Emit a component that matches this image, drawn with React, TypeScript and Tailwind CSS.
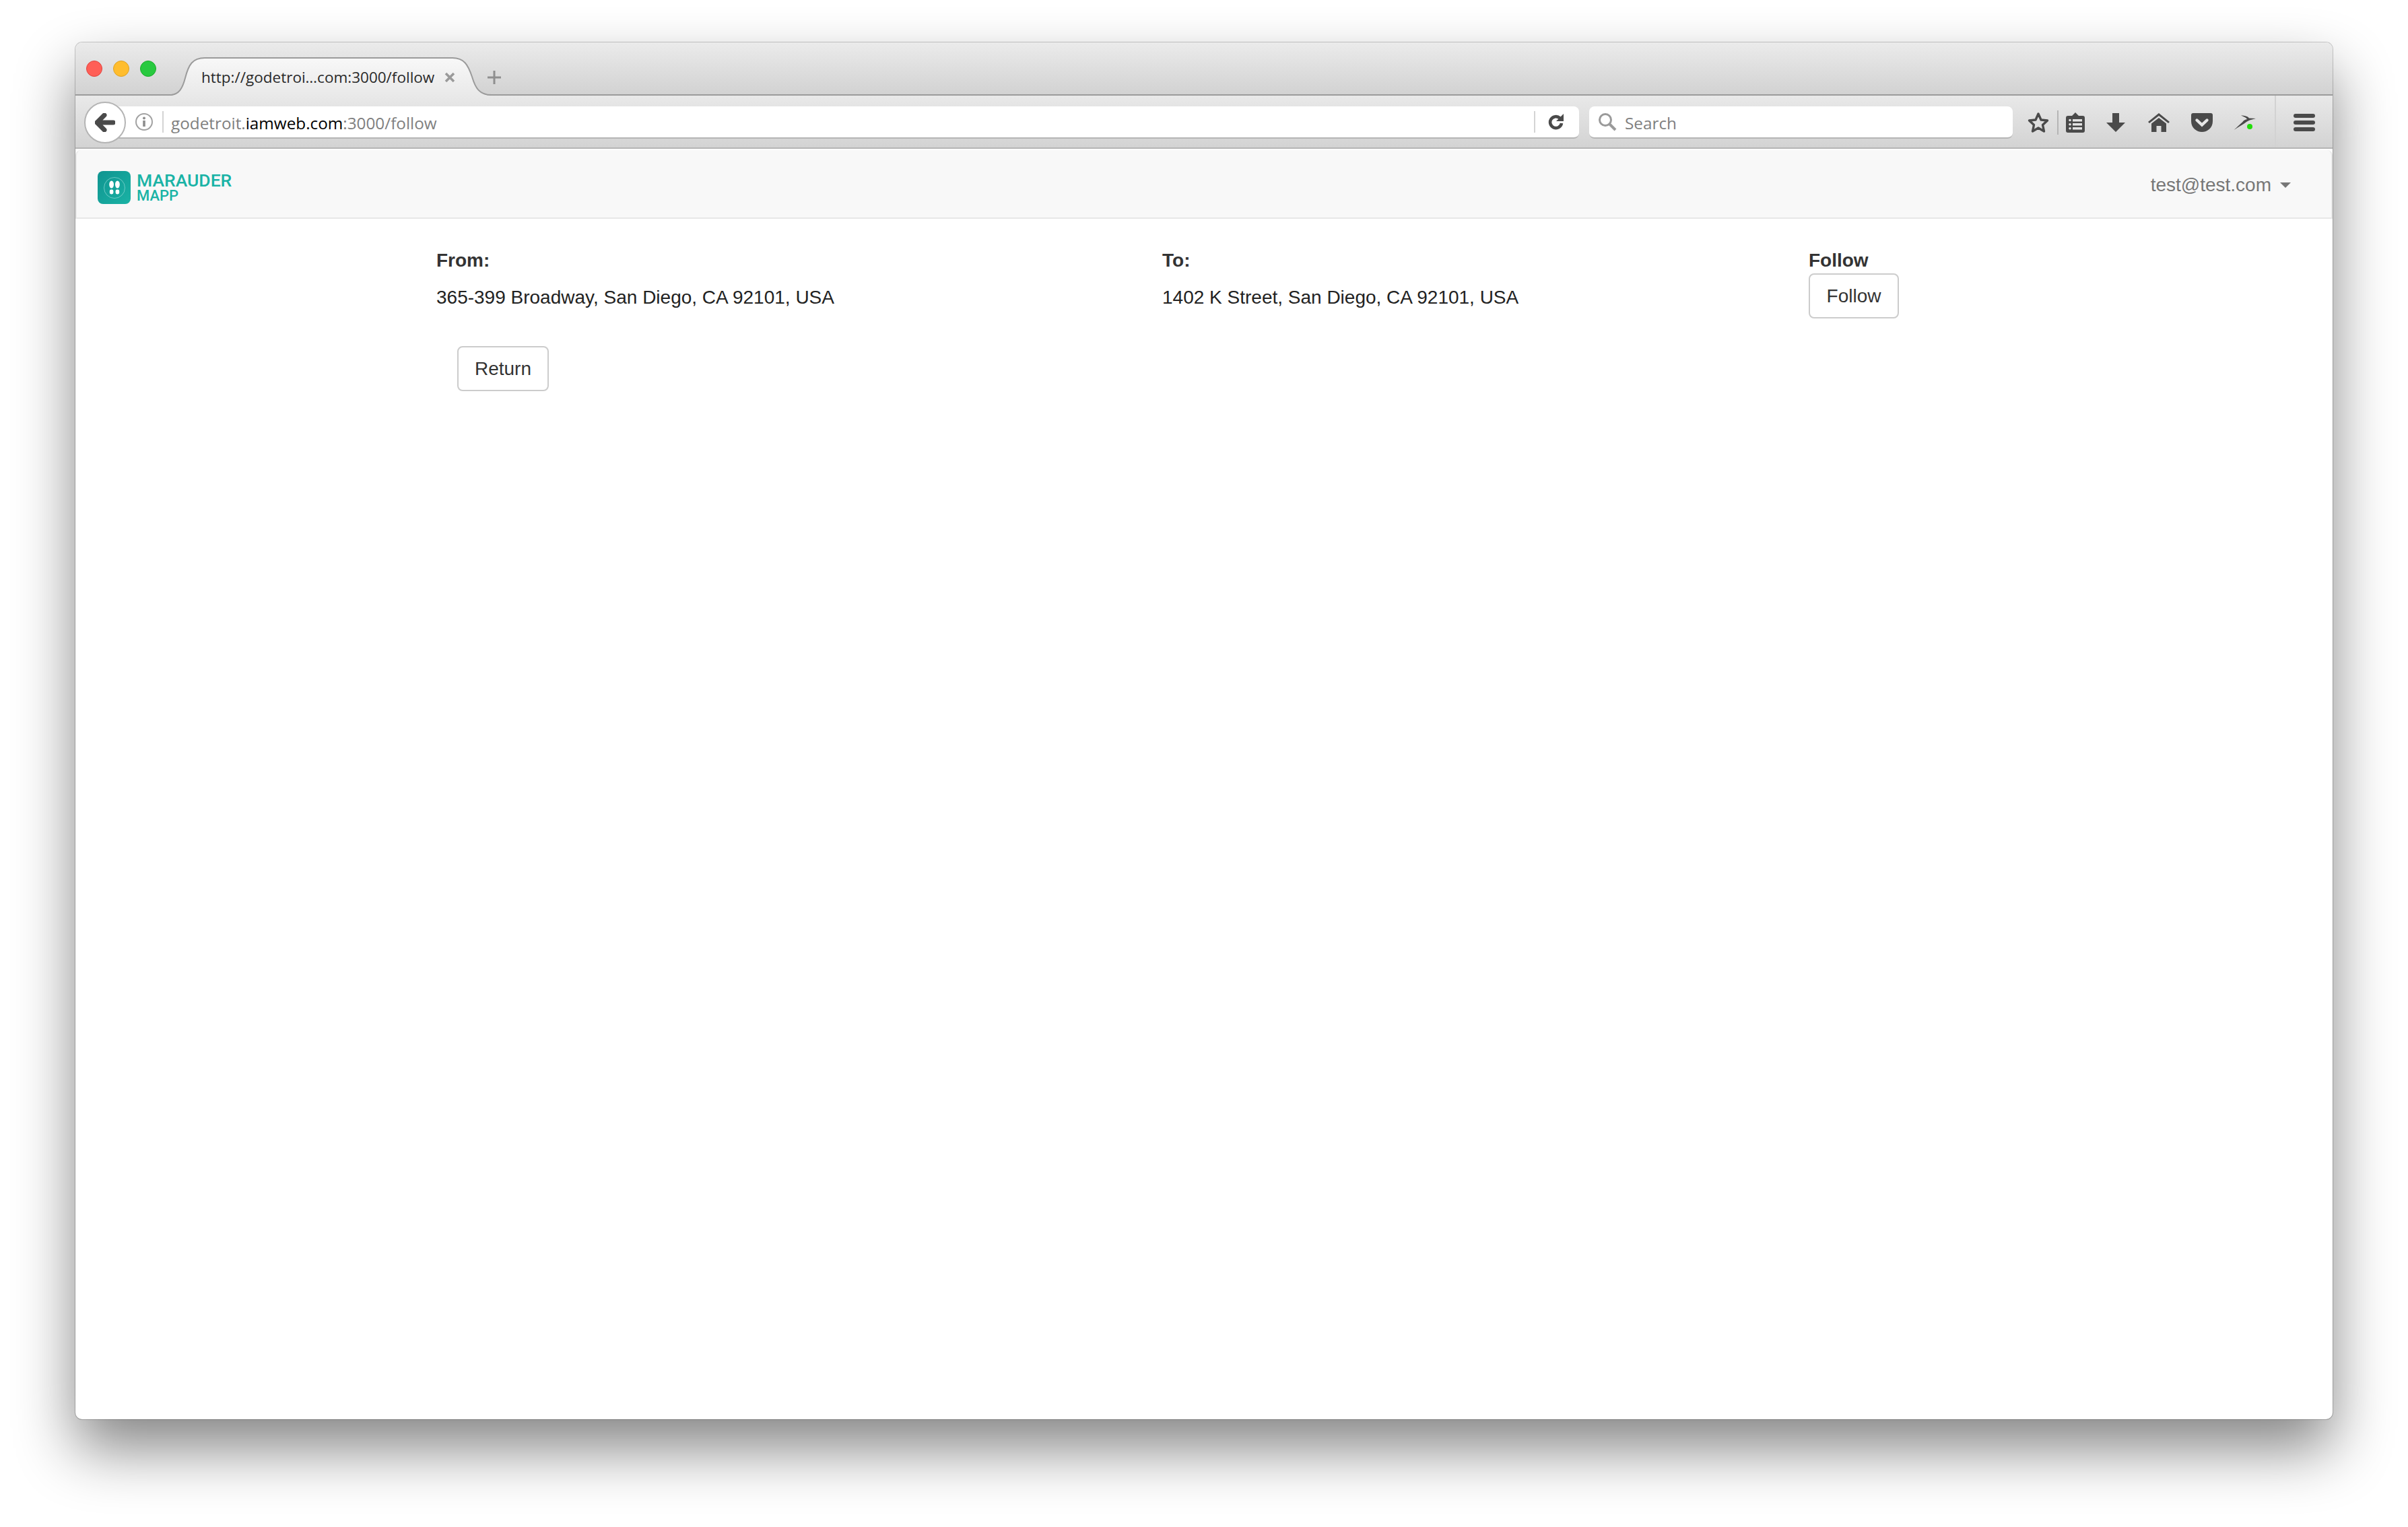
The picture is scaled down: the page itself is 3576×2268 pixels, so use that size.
import React from "react";

const ICON = "#4a4a4a";

function Tab() {
  return (
    <div className="relative z-10 ml-2 -mb-[2px] h-[58px] w-[500px] self-end">
      <svg className="absolute inset-0" width="500" height="58" viewBox="0 0 500 58">
        <defs>
          <linearGradient id="tabFill" x1="0" y1="0" x2="0" y2="1">
            <stop offset="0" stopColor="#f8f8f8" />
            <stop offset="1" stopColor="#e9e9e9" />
          </linearGradient>
        </defs>
        <path d="M0 58 H12 C26 58 31 47 35 32 C40 12 46 2 64 2 H432 C449 2 455 12 461 30 C466 47 472 58 490 58 Z" fill="url(#tabFill)" />
        <path d="M0 57 H12 C26 57 31 47 35 32 C40 12 46 2 64 2 H432 C449 2 455 12 461 30 C466 47 472 57 490 57 H500" fill="none" stroke="#9b9b9b" strokeWidth="2" />
      </svg>
      <div className="relative flex h-full items-center pl-[59px] pt-[4px]">
        <span className="font-['Open_Sans',sans-serif] text-[22.5px] leading-none whitespace-nowrap text-[#2a2a2a]">http://godetroi…com:3000/follow</span>
        <span className="absolute left-[420px] top-[23px]">
          <svg width="16" height="16" viewBox="0 0 16 16"><path d="M2 2 L14 14 M14 2 L2 14" stroke="#9a9a9a" strokeWidth="3.6" /></svg>
        </span>
      </div>
    </div>
  );
}

function BackButton() {
  return (
    <div className="relative z-10 flex h-[62px] w-[62px] shrink-0 items-center justify-center rounded-full border-2 border-[#b4b4b4] bg-white">
      <svg width="30" height="28" viewBox="0 0 30 28"><path d="M14 3 L3 14 L14 25 M4 14 H27" fill="none" stroke={ICON} strokeWidth="7" strokeLinejoin="round" strokeLinecap="round" /></svg>
    </div>
  );
}

function UrlBar() {
  return (
    <div className="-ml-[17px] flex h-[48px] w-[2175px] shrink-0 items-center rounded-r-[8px] border-b-2 border-[#b5b5b5] bg-white pl-[31px]">
      <svg width="26" height="26" viewBox="0 0 26 26" className="shrink-0">
        <circle cx="13" cy="13" r="12" fill="none" stroke="#a2a2a2" strokeWidth="2" />
        <circle cx="13" cy="7.5" r="2" fill="#8e8e8e" />
        <rect x="11.2" y="11" width="3.6" height="9" fill="#8e8e8e" />
      </svg>
      <div className="ml-[14px] h-[32px] w-[2px] shrink-0 bg-[#d4d4d4]" />
      <div className="ml-[11px] flex-1 pt-[4px] font-['Open_Sans',sans-serif] text-[24.3px] leading-none whitespace-nowrap text-[#808080]">
        godetroit.<span className="text-black">iamweb.com</span>:3000/follow
      </div>
      <div className="h-[32px] w-[2px] shrink-0 bg-[#d4d4d4]" />
      <svg width="24" height="24" viewBox="0 0 24 24" className="ml-[19px] mr-[22px] shrink-0">
        <path d="M17.5 6.5 A8.5 8.5 0 1 0 20 14" fill="none" stroke={ICON} strokeWidth="4.6" />
        <path d="M23 0 V11 H12 Z" fill={ICON} />
      </svg>
    </div>
  );
}

function SearchBar() {
  return (
    <div className="ml-[15px] flex h-[48px] w-[629px] shrink-0 items-center rounded-[8px] border-b-2 border-[#b5b5b5] bg-white pl-[13px]">
      <svg width="28" height="28" viewBox="0 0 28 28" className="shrink-0">
        <circle cx="11" cy="11" r="8.5" fill="none" stroke="#9a9a9a" strokeWidth="3" />
        <path d="M17 17 L26 26" stroke="#9a9a9a" strokeWidth="4" />
      </svg>
      <span className="ml-[12px] pt-[4px] font-['Open_Sans',sans-serif] text-[24.3px] leading-none text-[#808080]">Search</span>
    </div>
  );
}

function ToolbarIcons() {
  return (
    <>
      <svg width="32" height="32" viewBox="0 0 32 32" className="ml-[22px] shrink-0">
        <path d="M16 3 L20 12 L29.5 13 L22.5 19.5 L24.5 29 L16 24 L7.5 29 L9.5 19.5 L2.5 13 L12 12 Z" fill="none" stroke={ICON} strokeWidth="3.4" strokeLinejoin="round" />
      </svg>
      <div className="ml-[12px] h-[36px] w-[2px] shrink-0 bg-[#b5b5b5]" />
      <svg width="28" height="30" viewBox="0 0 28 30" className="ml-[11px] shrink-0">
        <path d="M3 5 H9 L14 0 L19 5 H25 A3 3 0 0 1 28 8 V27 A3 3 0 0 1 25 30 H3 A3 3 0 0 1 0 27 V8 A3 3 0 0 1 3 5 Z" fill={ICON} />
        <path d="M10 10 H24 V13.5 H10 Z M10 16 H24 V19.5 H10 Z M10 22 H24 V25.5 H10 Z" fill="#e3e3e3" />
        <circle cx="6" cy="11.5" r="1.8" fill="#e3e3e3" />
        <circle cx="6" cy="17.7" r="1.8" fill="#e3e3e3" />
        <circle cx="6" cy="23.7" r="1.8" fill="#e3e3e3" />
      </svg>
      <svg width="28" height="28" viewBox="0 0 28 28" className="ml-[32px] shrink-0">
        <path d="M9 0 H19 V14 H28 L14 28 L0 14 H9 Z" fill={ICON} />
      </svg>
      <svg width="32" height="28" viewBox="0 0 32 28" className="ml-[34px] shrink-0">
        <path d="M16 0 L32 13 L30 15 L16 4 L2 15 L0 13 Z" fill={ICON} />
        <path d="M16 7 L27 15.5 V28 H19.5 V19 H12.5 V28 H5 V15.5 Z" fill={ICON} />
      </svg>
      <svg width="32" height="28" viewBox="0 0 32 28" className="ml-[32px] shrink-0">
        <path d="M3 0 H29 A3 3 0 0 1 32 3 V12 C32 22 24 28 16 28 C8 28 0 22 0 12 V3 A3 3 0 0 1 3 0 Z" fill={ICON} />
        <path d="M8.5 10.5 L16 17.5 L23.5 10.5" fill="none" stroke="#e6e6e6" strokeWidth="4.4" strokeLinecap="round" />
      </svg>
      <svg width="33" height="24" viewBox="0 0 33 24" className="ml-[31px] shrink-0">
        <path d="M0.5 23 C6 18 10 14 13.5 11 C15 9 16 8 20 7 C19 5 16 3.5 11 1.5 C16 1.5 21 2.5 23 5.5 L33 6 L24 8.5 C20 10 18 12 15 14 C10 17 5 20 0.5 23 Z" fill={ICON} />
        <circle cx="24" cy="18" r="4" fill="#22dd0a" />
      </svg>
      <div className="-mt-[3px] ml-[28px] w-[2px] shrink-0 self-stretch bg-[#d2d2d2]" />
      <div className="ml-[26px] flex w-[32px] shrink-0 flex-col gap-[4px]">
        <div className="h-[6px] rounded-full bg-[#4a4a4a]" />
        <div className="h-[6px] rounded-full bg-[#4a4a4a]" />
        <div className="h-[6px] rounded-full bg-[#4a4a4a]" />
      </div>
    </>
  );
}

function Logo() {
  return (
    <div className="mt-[31px] flex items-start">
      <div className="flex h-[49px] w-[49px] items-center justify-center rounded-[8px] bg-gradient-to-br from-[#0f9490] to-[#1bb3a5]">
        <svg width="36" height="36" viewBox="0 0 36 36">
          <circle cx="18" cy="18" r="15.5" fill="none" stroke="#7fd3cd" strokeWidth="0.8" />
          <ellipse cx="13.6" cy="13" rx="3.4" ry="5.6" fill="#fff" />
          <ellipse cx="22.4" cy="13" rx="3.4" ry="5.6" fill="#fff" />
          <rect x="10.8" y="20.5" width="5.6" height="7" rx="2.4" fill="#fff" />
          <rect x="19.6" y="20.5" width="5.6" height="7" rx="2.4" fill="#fff" />
        </svg>
      </div>
      <div className="-mt-[2px] ml-[9px] flex flex-col font-['Roboto',sans-serif] font-medium text-[#1ab3a6]">
        <span className="h-[27px] text-[26.5px] leading-[32px] whitespace-nowrap">MARAUDER</span>
        <span className="h-[20px] text-[22px] leading-[24px] whitespace-nowrap">MAPP</span>
      </div>
    </div>
  );
}

function Btn({ children, className }: { children: React.ReactNode; className: string }) {
  return (
    <button className={"flex h-[67px] items-center justify-center rounded-[8px] border-2 border-[#cccccc] bg-white text-[28px] text-[#333333] " + className}>
      {children}
    </button>
  );
}

export default function App() {
  return (
    <div className="h-[2268px] w-[3576px] overflow-hidden bg-white pl-[112px] pt-[63px] font-['Liberation_Sans',sans-serif]">
      <div className="flex h-[2045px] w-[3352px] flex-col overflow-hidden rounded-[10px] bg-white shadow-[0_44px_88px_rgba(0,0,0,0.48),0_0_0_1px_rgba(0,0,0,0.2)]">
        <div className="flex h-[79px] shrink-0 border-b-2 border-[#9b9b9b] bg-gradient-to-b from-[#ebebeb] to-[#d2d2d2] pl-4">
          <div className="mt-[27px] flex gap-4">
            <div className="h-[24px] w-[24px] rounded-full border border-[#e0443e] bg-[#ff5f57]" />
            <div className="h-[24px] w-[24px] rounded-full border border-[#dea123] bg-[#ffbd2e]" />
            <div className="h-[24px] w-[24px] rounded-full border border-[#1aab29] bg-[#28c93f]" />
          </div>
          <Tab />
          <svg width="22" height="22" viewBox="0 0 22 22" className="mt-[41px] shrink-0 -ml-[17px]">
            <path d="M11 1 V21 M1 11 H21" stroke="#8f8f8f" strokeWidth="3" />
          </svg>
        </div>
        <div className="flex h-[79px] shrink-0 items-center border-b-2 border-[#b4b4b4] bg-gradient-to-b from-[#e9e9e9] to-[#d3d3d3] pl-[13px] pt-[3px]">
          <BackButton />
          <UrlBar />
          <SearchBar />
          <ToolbarIcons />
        </div>
        <div className="mt-[2px] flex h-[102px] shrink-0 items-start justify-between rounded-t-[8px] border-x-2 border-b-2 border-[#e7e7e7] bg-[#f8f8f8] pl-[31px] pr-[60px]">
          <Logo />
          <div className="mt-[32px] flex items-center text-[28px] leading-[40px] text-[#777777]">
            test@test.com
            <span className="ml-[13px] h-0 w-0 border-x-[8px] border-t-[8px] border-x-transparent border-t-[#777777]" />
          </div>
        </div>
        <div className="flex-1 pl-[536px] pt-[42px] text-[28px] leading-[40px] text-[#333333]">
          <div className="flex">
            <div className="w-[1078px]">
              <div className="font-bold">From:</div>
              <div className="mt-[15px] text-[#222222]">365-399 Broadway, San Diego, CA 92101, USA</div>
            </div>
            <div className="w-[960px]">
              <div className="font-bold">To:</div>
              <div className="mt-[15px] text-[#222222]">1402 K Street, San Diego, CA 92101, USA</div>
            </div>
            <div>
              <div className="font-bold">Follow</div>
              <Btn className="-mt-[1px] w-[134px]">Follow</Btn>
            </div>
          </div>
          <Btn className="ml-[31px] mt-[41px] w-[136px]">Return</Btn>
        </div>
      </div>
    </div>
  );
}
